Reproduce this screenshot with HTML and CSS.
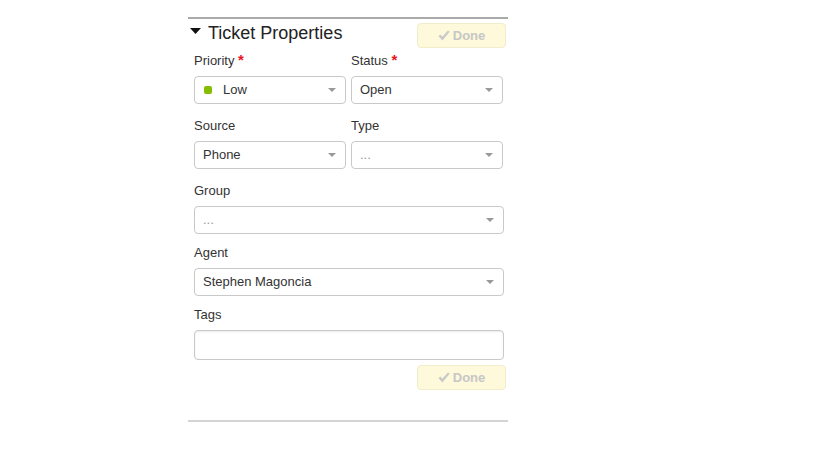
FILE: index.html
```html
<!DOCTYPE html>
<html>
<head>
<meta charset="utf-8">
<link rel="stylesheet" href="styles.css">
</head>
<body>
<div class="panel">
  <div class="header">
    <div class="title">
      <svg class="caret" width="11" height="6" viewBox="0 0 11 6"><path d="M0 0H11L5.5 6Z" fill="#111"/></svg>
      <span>Ticket Properties</span>
    </div>
    <button class="done"><svg class="check" width="12" height="11" viewBox="0 0 12 11"><path d="M0.5 6.2L2.3 4.6L4.3 6.8L10 0.4L11.6 1.8L4.4 10.4Z" fill="#c9c9c9"/></svg>Done</button>
  </div>

  <div class="row">
    <div class="field">
      <label class="lbl">Priority <span class="req">*</span></label>
      <div class="select"><span class="dot"></span>Low<span class="arrow"></span></div>
    </div>
    <div class="field">
      <label class="lbl">Status <span class="req">*</span></label>
      <div class="select">Open<span class="arrow"></span></div>
    </div>
  </div>

  <div class="row">
    <div class="field">
      <label class="lbl">Source</label>
      <div class="select">Phone<span class="arrow"></span></div>
    </div>
    <div class="field">
      <label class="lbl">Type</label>
      <div class="select placeholder">...<span class="arrow"></span></div>
    </div>
  </div>

  <div class="field single">
    <label class="lbl">Group</label>
    <div class="select placeholder">...<span class="arrow"></span></div>
  </div>

  <div class="field single">
    <label class="lbl">Agent</label>
    <div class="select">Stephen Magoncia<span class="arrow"></span></div>
  </div>

  <div class="field tags">
    <label class="lbl">Tags</label>
    <div class="input"></div>
  </div>

  <div class="footer">
    <button class="done"><svg class="check" width="12" height="11" viewBox="0 0 12 11"><path d="M0.5 6.2L2.3 4.6L4.3 6.8L10 0.4L11.6 1.8L4.4 10.4Z" fill="#c9c9c9"/></svg>Done</button>
  </div>
</div>
</body>
</html>
```

FILE: styles.css
```css
html, body {
  margin: 0;
  padding: 0;
  background: #fff;
}

body {
  font-family: "Liberation Sans", Arial, sans-serif;
  color: #333;
}

.panel {
  margin: 17px 0 0 188px;
  width: 312px;
  padding: 0 2px 30px 6px;
  border-top: 2px solid #aaaaaa;
  border-bottom: 2px solid #d4d4d4;
  box-sizing: content-box;
}

.header {
  display: flex;
  justify-content: space-between;
  align-items: flex-start;
  padding-top: 4px;
  margin-bottom: 3px;
  margin-left: -6px;
}

.title {
  display: flex;
  align-items: flex-start;
  font-size: 18px;
  line-height: 20px;
  color: #222;
}

.caret {
  margin: 5px 7px 0 2px;
  display: block;
}

.done {
  width: 89px;
  height: 25px;
  box-sizing: border-box;
  background: #fdf9da;
  border: 1px solid #f1ecc9;
  border-radius: 4px;
  color: #c7c7c7;
  font-family: "Liberation Sans", Arial, sans-serif;
  font-weight: bold;
  font-size: 13px;
  padding: 0;
  display: flex;
  align-items: center;
  justify-content: center;
  gap: 3px;
}

.check {
  display: block;
}

.row {
  display: grid;
  grid-template-columns: 152px 152px;
  column-gap: 5px;
  margin-bottom: 12px;
}

.lbl {
  display: block;
  font-size: 13px;
  line-height: 20px;
  height: 20px;
  margin-bottom: 5px;
  color: #333;
}

.req {
  color: #e8141b;
  font-weight: bold;
  font-size: 15px;
  line-height: 0;
}

.select {
  position: relative;
  height: 28px;
  box-sizing: border-box;
  border: 1px solid #c9c9c9;
  border-radius: 4px;
  padding-left: 8px;
  font-size: 13px;
  line-height: 26px;
  color: #333;
  display: flex;
  align-items: center;
}

.single .select,
.tags .input {
  width: 310px;
}

.single {
  margin-bottom: 9px;
}

.placeholder {
  color: #999;
}

.dot {
  width: 8px;
  height: 8px;
  border-radius: 2px;
  background: #84bd00;
  margin: 0 11px 0 1px;
}

.arrow {
  position: absolute;
  right: 9px;
  top: 11px;
  width: 0;
  height: 0;
  border-left: 4px solid transparent;
  border-right: 4px solid transparent;
  border-top: 4px solid #999;
}

.input {
  height: 30px;
  box-sizing: border-box;
  border: 1px solid #c9c9c9;
  border-radius: 4px;
  box-shadow: inset 0 1px 2px rgba(0, 0, 0, 0.08);
}

.footer {
  display: flex;
  justify-content: flex-end;
  margin-top: 5px;
}
```
